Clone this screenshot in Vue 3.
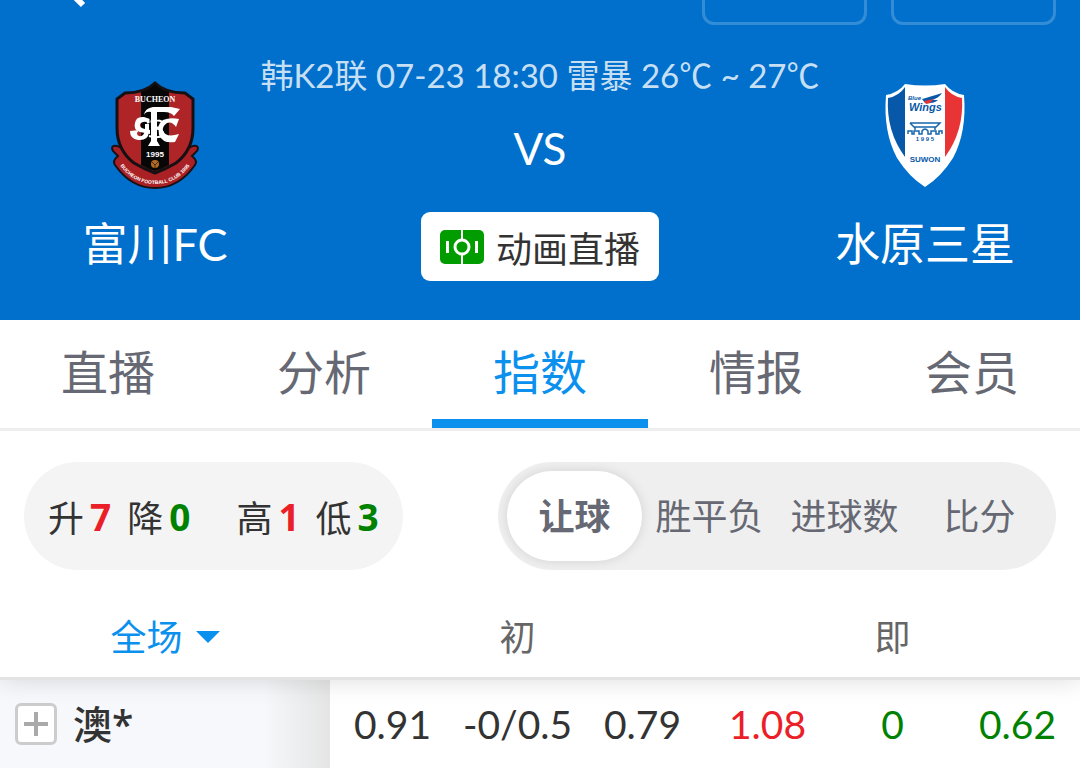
<template>
  <div class="page">
    <header class="match-header">
      <div class="top-bar">
        <button class="back" type="button" aria-label="返回">
          <svg width="40" height="25" viewBox="0 0 40 25"><path d="M18 -26 L-1 -7 L11 5" fill="none" stroke="#fff" stroke-width="6" /></svg>
        </button>
        <div class="top-actions">
          <button class="ghost" type="button" aria-label="关注"></button>
          <button class="ghost" type="button" aria-label="分享"></button>
        </div>
      </div>

      <div class="match">
        <div class="team">
          <svg class="crest" viewBox="0 0 92 110" aria-hidden="true">
            <path d="M8 66 Q1 65 4 71 L9 76 Q3 81 6 85 Q22 108 46 108 Q70 108 86 85 Q89 81 83 76 L88 71 Q91 65 84 66 Q79 67 76 73 H16 Q13 67 8 66Z" fill="#a92125" stroke="#1b1114" stroke-width="2" />
            <path d="M46 3 Q56 13 76 13 L84 19 V48 Q84 70 67 83 Q57 89 46 93 Q35 89 25 83 Q8 70 8 48 V19 L16 13 Q36 13 46 3Z" fill="#ae2427" stroke="#161014" stroke-width="3" />
            <path d="M32 12 Q40 10 46 4 Q52 10 60 12 V85 Q53 89 46 91 Q39 89 32 85Z" fill="#080708" />
            <text x="46" y="22" text-anchor="middle" class="crest-name">BUCHEON</text>
            <g fill="#fff">
              <path d="M35 35 Q36 28 44 27 H62 L71 29 L65 36 Q62 32 55 32 H48 V61 L51 66 H39 L42 61 V32 Q37 31 35 35Z" />
              <path d="M26 43 Q27 36 35 37 L41 39 V43 Q34 40 31 44 Q30 48 36 49 L41 50 V54 L31 52 Q24 50 26 43Z" />
              <path d="M21 51 L30 50 Q26 54 30 56 Q35 57 36 50 V44 H40 V52 Q39 61 29 60 Q21 59 21 51Z" />
              <path d="M70 39 L67 47 Q63 41 58 43 Q53 46 54 51 Q57 58 70 54 L66 62 Q54 64 50 55 Q47 45 54 40 Q61 37 70 39Z" />
            </g>
            <path d="M38 43 Q47 38 54 42 Q56 47 45 48 Q56 50 54 55 Q50 59 40 56 M47 31 V60" fill="none" stroke="#fff" stroke-width="2" />
            <path d="M41 35 V47 M49 35 V40 M49 50 V55" fill="none" stroke="#080708" stroke-width="1" />
            <text x="46" y="77" text-anchor="middle" class="crest-year">1995</text>
            <circle cx="46" cy="84" r="4" fill="#b26b20" />
            <path d="M43 82 L46 85 L49 82 M46 85 V88" fill="none" stroke="#4a2a10" stroke-width="1" />
            <path id="ribbon" d="M10 84 Q24 104 46 104 Q68 104 82 84" fill="none" />
            <text class="crest-ribbon"><textPath href="#ribbon" startOffset="50%" text-anchor="middle">BUCHEON FOOTBALL CLUB 1995</textPath></text>
          </svg>
          <span class="team-name">富川FC</span>
        </div>

        <div class="center">
          <div class="info">韩K2联 07-23 18:30 雷暴 26℃ ~ 27℃</div>
          <div class="versus">VS</div>
          <button class="live" type="button">
            <svg width="44" height="34" viewBox="0 0 44 34" aria-hidden="true">
              <rect width="44" height="34" rx="5" fill="#009c00" />
              <path d="M22 0 V9 M22 25 V34" stroke="#fff" stroke-width="2" />
              <circle cx="22" cy="17" r="7" fill="none" stroke="#fff" stroke-width="3" />
              <path d="M7.500 11 V23 M36.500 11 V23" stroke="#fff" stroke-width="3" />
            </svg>
            动画直播
          </button>
        </div>

        <div class="team">
          <svg class="crest" viewBox="0 0 92 110" aria-hidden="true">
            <path d="M26 4 Q46 7 66 4 Q73 13 85 15 Q88 52 74 78 Q62 97 46 107 Q30 97 18 78 Q4 52 7 15 Q19 13 26 4Z" fill="#fff" />
            <path d="M26 7 V77 Q7 51 9 18 Q20 16 26 7Z" fill="#0758a8" />
            <path d="M66 7 V77 Q85 51 83 18 Q72 16 66 7Z" fill="#e93435" />
            <text x="29" y="20" class="wings-small">Blue</text>
            <text x="30" y="31" class="wings">Wings</text>
            <path d="M43 19 Q50 17 63 13 Q60 18 53 20 Q57 20 59 20 Q54 24 46 23Z" fill="#0758a8" />
            <path d="M45 21 L55 19 L51 23 L47 24Z" fill="#e93435" />
            <g fill="none" stroke="#1765ae" stroke-width="1.500">
              <path d="M31 43 H61 L57 47 H35 L31 43 M36 47 V50 M56 47 V50" />
              <path d="M29 54 V51 H33 V54 H35 V51 H40 V54 H43 V51 Q46 47 49 51 V54 H52 V51 H57 V54 H60 V51 H63 V54" />
            </g>
            <text x="46" y="61" text-anchor="middle" class="wings-year">1 9 9 5</text>
            <text x="46" y="82" text-anchor="middle" class="wings-city">SUWON</text>
          </svg>
          <span class="team-name">水原三星</span>
        </div>
      </div>
    </header>

    <nav class="tabs">
      <a v-for="t in tabs" :key="t" href="#" :class="{ active: t === activeTab }" @click.prevent="activeTab = t">{{ t }}</a>
    </nav>

    <section class="filters">
      <div class="stats">
        <div v-for="(group, i) in stats" :key="i" class="stat-group">
          <span v-for="s in group" :key="s.label" class="stat">{{ s.label }}<b :class="s.color">{{ s.value }}</b></span>
        </div>
      </div>
      <div class="segments">
        <button v-for="m in markets" :key="m" type="button" :class="{ active: m === market }" @click="market = m">{{ m }}</button>
      </div>
    </section>

    <table class="odds">
      <thead>
        <tr>
          <th class="company-col">
            <div class="period">
              <select v-model="period" aria-label="时段">
                <option>全场</option>
                <option>半场</option>
              </select>
              <svg width="24" height="12" viewBox="0 0 24 12" aria-hidden="true"><path d="M0 0 H24 L12 12Z" fill="#0b90ee" /></svg>
            </div>
          </th>
          <th colspan="3">初</th>
          <th colspan="3">即</th>
        </tr>
      </thead>
      <tbody>
        <tr v-for="row in rows" :key="row.company">
          <td class="company-col">
            <div class="company">
              <button class="expand" type="button" aria-label="展开">
                <svg width="24" height="24" viewBox="0 0 24 24"><path d="M12 0 V24 M0 12 H24" stroke="#aaa" stroke-width="4" /></svg>
              </button>
              {{ row.company }}
            </div>
          </td>
          <td v-for="(o, i) in row.odds" :key="i" :class="o.color">{{ o.value }}</td>
        </tr>
      </tbody>
    </table>
  </div>
</template>

<script setup>
import { ref } from 'vue'

const tabs = ['直播', '分析', '指数', '情报', '会员']
const activeTab = ref('指数')

const markets = ['让球', '胜平负', '进球数', '比分']
const market = ref('让球')
const period = ref('全场')

const stats = [
  [
    { label: '升', value: 7, color: 'red' },
    { label: '降', value: 0, color: 'green' },
  ],
  [
    { label: '高', value: 1, color: 'red' },
    { label: '低', value: 3, color: 'green' },
  ],
]

const rows = [
  {
    company: '澳*',
    odds: [
      { value: '0.91' },
      { value: '-0/0.5' },
      { value: '0.79' },
      { value: '1.08', color: 'red' },
      { value: '0', color: 'green' },
      { value: '0.62', color: 'green' },
    ],
  },
]
</script>

<style>
body {
  margin: 0;
  background: #fff;
}
</style>

<style scoped>
.page {
  font-family: Lato, 'Noto Sans CJK SC', sans-serif;
  color: #333;
  overflow: hidden;
}

button,
select {
  font: inherit;
  color: inherit;
  border: 0;
  padding: 0;
  background: none;
}

.match-header {
  background: #0170cc;
  color: #fff;
  padding-bottom: 39px;
}
.top-bar {
  display: flex;
  justify-content: space-between;
  height: 25px;
  padding: 0 24px 0 72px;
}
.top-actions {
  display: flex;
  gap: 24px;
}
.ghost {
  box-sizing: border-box;
  width: 165px;
  height: 25px;
  border: 3px solid rgba(255, 255, 255, 0.2);
  border-top: 0;
  border-radius: 0 0 12px 12px;
}

.match {
  display: grid;
  grid-template-columns: 310px minmax(0, 1fr) 310px;
  padding-top: 30px;
}
.team {
  display: flex;
  flex-direction: column;
  align-items: center;
  padding-top: 25px;
}
.crest {
  width: 92px;
  height: 110px;
}
.crest text {
  fill: #fff;
}
.crest-name {
  font: bold 8px 'Liberation Serif', serif;
}
.crest-year {
  font: bold 8px 'Liberation Sans', sans-serif;
}
.crest-ribbon {
  font: bold 5px 'Liberation Sans', sans-serif;
}
.crest .wings,
.crest .wings-small,
.crest .wings-year,
.crest .wings-city {
  fill: #0758a8;
}
.wings {
  font: italic bold 11px 'Liberation Sans', sans-serif;
}
.wings-small {
  font: italic bold 6px 'Liberation Sans', sans-serif;
}
.wings-year {
  font: bold 6px 'Liberation Sans', sans-serif;
}
.wings-city {
  font: bold 8px 'Liberation Sans', sans-serif;
}
.team-name {
  font-size: 45px;
  line-height: 60px;
  margin-top: 24px;
}
.center {
  display: flex;
  flex-direction: column;
  align-items: center;
}
.info {
  font-size: 33px;
  line-height: 40px;
  white-space: nowrap;
  color: rgba(255, 255, 255, 0.8);
}
.versus {
  font-size: 44px;
  line-height: 60px;
  margin: 23px 0 34px;
}
.live {
  display: flex;
  align-items: center;
  gap: 12px;
  height: 69px;
  padding: 0 19px;
  border-radius: 9px;
  background: #fff;
  color: #333;
  font-size: 36px;
}

.tabs {
  display: flex;
  border-bottom: 3px solid #eee;
}
.tabs a {
  flex: 1;
  border-bottom: 9px solid transparent;
  font-size: 47px;
  line-height: 93px;
  padding-top: 6px;
  text-align: center;
  text-decoration: none;
  color: #666973;
}
.tabs a.active {
  color: #0b90ee;
  border-color: #0b90ee;
}

.filters {
  display: flex;
  justify-content: space-between;
  padding: 31px 24px 30px;
}
.stats,
.segments {
  display: flex;
  align-items: center;
  box-sizing: border-box;
  height: 108px;
  border-radius: 54px;
}
.stats {
  gap: 46px;
  padding: 0 24px;
  background: #f4f4f4;
  font-size: 36px;
}
.stat-group {
  display: flex;
  gap: 16px;
}
.stat {
  display: flex;
  align-items: center;
  gap: 6px;
}
.stat b {
  font-family: 'Noto Sans', sans-serif;
  font-size: 37px;
}
.segments {
  padding: 9px;
  background: #efefef;
}
.segments button {
  width: 135px;
  height: 90px;
  padding-bottom: 4px;
  border-radius: 45px;
  font-size: 36px;
  white-space: nowrap;
  color: #666973;
}
.segments .active {
  background: #fff;
  font-weight: bold;
  box-shadow: 0 0 12px rgba(0, 0, 0, 0.12);
}

.odds {
  width: 100%;
  table-layout: fixed;
  border-collapse: separate;
  border-spacing: 0;
  text-align: center;
}
.odds thead {
  position: relative;
  box-shadow: 0 0 24px rgba(0, 0, 0, 0.14);
  clip-path: inset(0 0 -30px 0);
}
.odds th {
  height: 73px;
  padding: 0 0 4px;
  border-bottom: 3px solid #e3e3e3;
  background: #fff;
  font-size: 36px;
  font-weight: normal;
  line-height: 50px;
  color: #666;
}
.odds .company-col {
  width: 330px;
}
.period {
  display: flex;
  align-items: center;
  justify-content: center;
  gap: 12px;
  color: #0b90ee;
}
.period select {
  appearance: none;
}
.odds td {
  height: 88px;
  padding: 0;
  font-size: 39px;
  line-height: 60px;
  white-space: nowrap;
}
.odds td.company-col {
  background: linear-gradient(to right, #f6f8fb 80%, #e5e5e5);
}
.company {
  display: flex;
  align-items: center;
  gap: 16px;
  padding-left: 15px;
  font-family: 'Noto Sans', 'Noto Sans CJK SC', sans-serif;
  font-weight: 500;
}
.expand {
  display: flex;
  align-items: center;
  justify-content: center;
  box-sizing: border-box;
  width: 42px;
  height: 42px;
  border: 3px solid #ccc;
  border-radius: 6px;
  background: #fff;
}
.red {
  color: #ea1f28;
}
.green {
  color: #008200;
}
</style>
